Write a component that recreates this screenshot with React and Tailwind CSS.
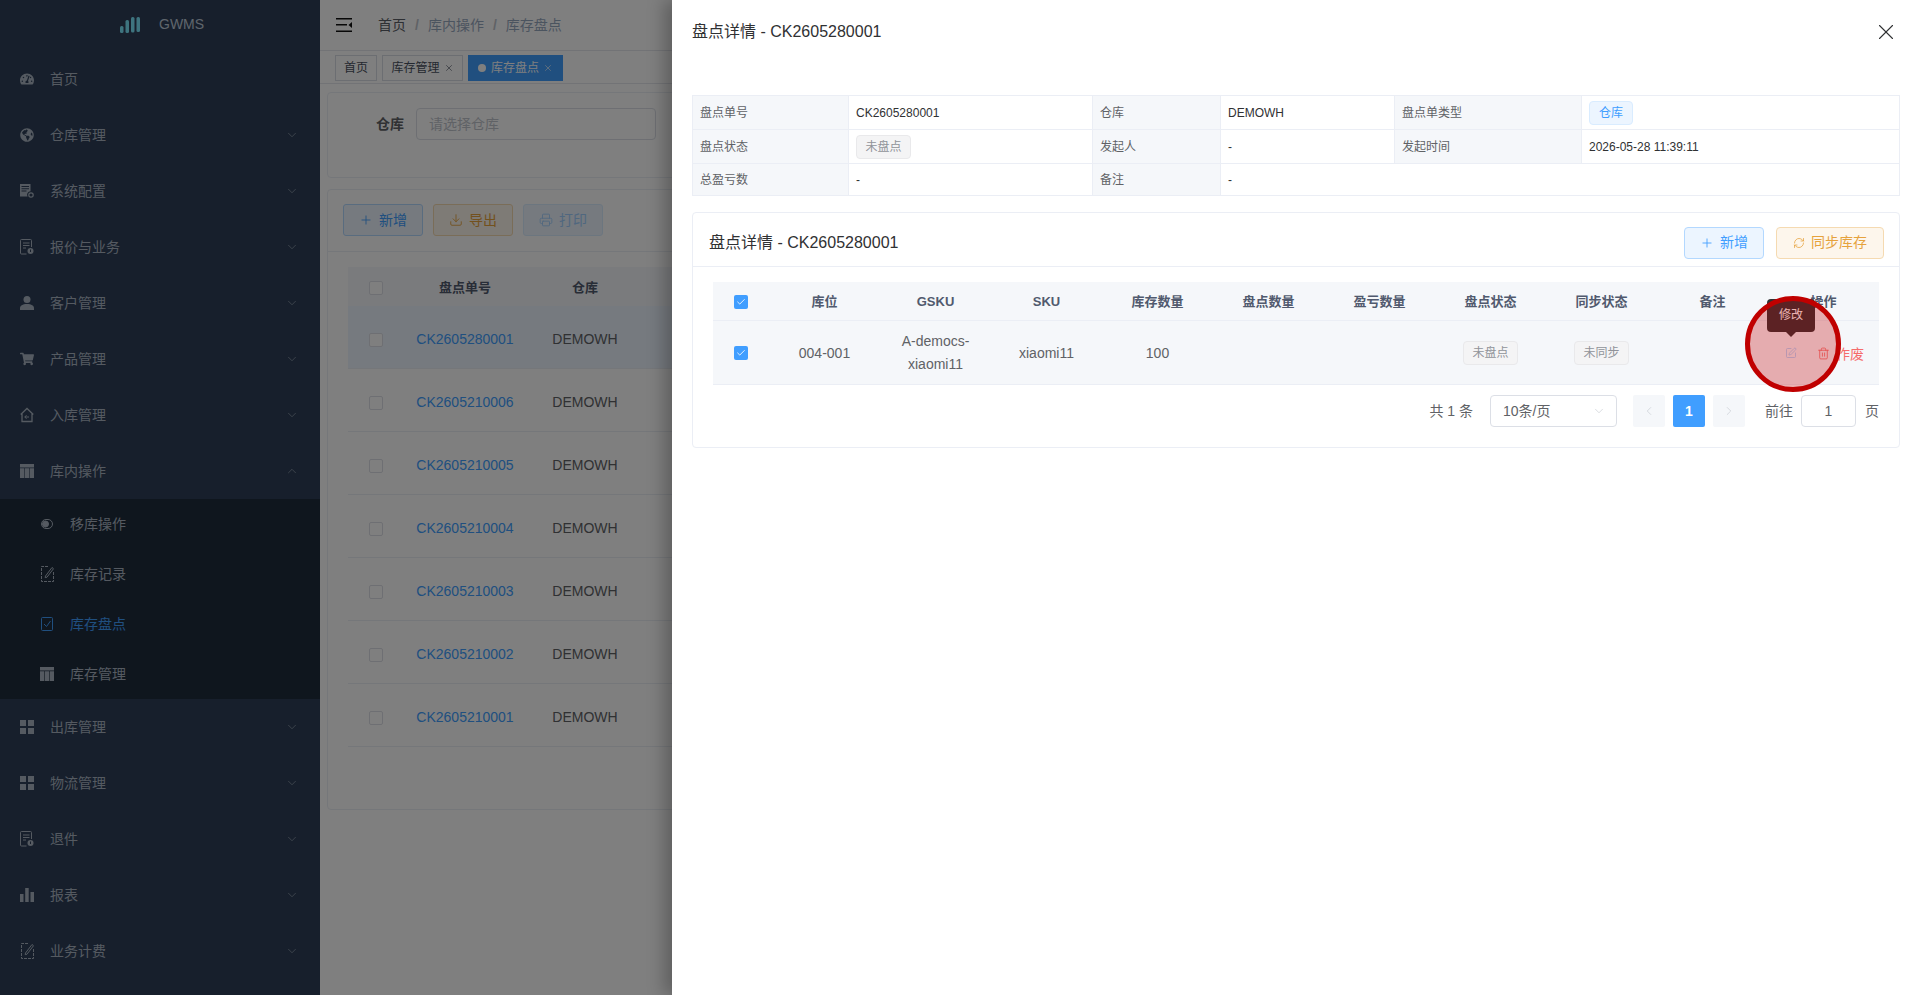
import React from 'react'
import { ChevronDown, ChevronUp, ChevronLeft, ChevronRight, Plus, Download, Printer, RefreshCw, X, SquarePen, Trash2, Check } from 'lucide-react'
import { FaTachometerAlt, FaGlobeAmericas, FaShoppingCart } from 'react-icons/fa'

const ServerDoc = () => (
  <svg viewBox="0 0 14 14" className="w-[14px] h-[14px]" fill="currentColor">
    <path d="M0 0h10.500v7.200a3.600 3.600 0 0 0-3 5.300H0z" />
    <path d="M1.500 2h7.500v1H1.500zM1.500 4.300h7.500v1H1.500zM1.500 6.600h5v1h-5z" fill="#2e3f58" />
    <circle cx="11" cy="11" r="2.200" fill="none" stroke="currentColor" strokeWidth="1.200" />
  </svg>
)
const OutlineDoc = () => (
  <svg viewBox="0 0 14 16" className="w-[14px] h-[16px]" fill="none" stroke="currentColor" strokeWidth="1">
    <path d="M6.500 15H1.500a1 1 0 0 1-1-1V1.500a1 1 0 0 1 1-1h9a1 1 0 0 1 1 1V8" />
    <path d="M3 4h6.500M3 6.500h6.500M3 9h3" />
    <circle cx="10.500" cy="12" r="3" fill="currentColor" stroke="none" />
    <path d="M10.500 10.500v2.500" stroke="#2e3f58" />
  </svg>
)
const House = () => (
  <svg viewBox="0 0 14 16" className="w-[14px] h-[16px]" fill="none" stroke="currentColor" strokeWidth="1.300">
    <path d="M.7 7.500 7 1.500l6.300 6M2 6.500v8h10v-8" />
    <path d="M4.800 10h4.200M6.500 8.200 4.800 10l1.700 1.800" strokeWidth="1" />
  </svg>
)
const Person = () => (
  <svg viewBox="0 0 14 14" className="w-[14px] h-[14px]" fill="currentColor">
    <circle cx="7" cy="3.500" r="3.500" />
    <path d="M0 14v-1.800C0 9.800 2.500 8 7 8s7 1.800 7 4.200V14z" />
  </svg>
)
const TableIcon = () => (
  <svg viewBox="0 0 14 14" className="w-[14px] h-[14px]" fill="currentColor">
    <path d="M0 0h14v3.500H0zM0 4.200h4.300V14H0zM4.900 4.200h4.200V14H4.900zM9.700 4.200H14V14H9.700z" />
  </svg>
)
const Squares = () => (
  <svg viewBox="0 0 14 14" className="w-[14px] h-[14px]" fill="currentColor">
    <path d="M0 0h6v6H0zM8 0h6v6H8zM0 8h6v6H0zM8 8h6v6H8z" />
  </svg>
)
const Bars = () => (
  <svg viewBox="0 0 14 14" className="w-[14px] h-[14px]" fill="currentColor">
    <path d="M0 6h3.500v8H0zM5.200 0h3.500v14H5.200zM10.500 4H14v10h-3.500z" />
  </svg>
)
const EditDoc = () => (
  <svg viewBox="0 0 13 16" className="w-[13px] h-[16px]" fill="none" stroke="currentColor" strokeWidth="1">
    <path d="M7 .5H.5v15h12V5" strokeDasharray="3 1" />
    <path d="m4.500 10 6.500-8.500 1.500 1.200L6 11.200l-1.800.5z" />
  </svg>
)
const Toggle = () => (
  <svg viewBox="0 0 12 10" className="w-[12px] h-[10px]" fill="none" stroke="currentColor" strokeWidth="1">
    <rect x=".5" y=".5" width="11" height="9" rx="4.500" />
    <circle cx="4.500" cy="5" r="3" fill="currentColor" />
  </svg>
)
const CheckSquare = () => (
  <svg viewBox="0 0 12 14" className="w-[12px] h-[14px]" fill="none" stroke="currentColor" strokeWidth="1">
    <rect x=".5" y=".5" width="11" height="13" rx="1" />
    <path d="m3 7 2.500 2.500L9.500 4" />
  </svg>
)

const menus = [
  { name: '首页', icon: <FaTachometerAlt className="w-[14px] h-[14px]" />, noArrow: true },
  { name: '仓库管理', icon: <FaGlobeAmericas className="w-[14px] h-[14px]" /> },
  { name: '系统配置', icon: <ServerDoc /> },
  { name: '报价与业务', icon: <OutlineDoc /> },
  { name: '客户管理', icon: <Person /> },
  { name: '产品管理', icon: <FaShoppingCart className="w-[14px] h-[14px]" /> },
  { name: '入库管理', icon: <House /> },
]
const menusAfter = [
  { name: '出库管理', icon: <Squares /> },
  { name: '物流管理', icon: <Squares /> },
  { name: '退件', icon: <OutlineDoc /> },
  { name: '报表', icon: <Bars /> },
  { name: '业务计费', icon: <EditDoc /> },
]
const subMenus = [
  { name: '移库操作', icon: <Toggle /> },
  { name: '库存记录', icon: <EditDoc /> },
  { name: '库存盘点', icon: <CheckSquare />, active: true },
  { name: '库存管理', icon: <TableIcon /> },
]
const orders = ['CK2605280001', 'CK2605210006', 'CK2605210005', 'CK2605210004', 'CK2605210003', 'CK2605210002', 'CK2605210001']

const MenuItem = ({ item, open }) => (
  <div className="h-[56px] pl-[20px] pr-[21px] flex items-center text-[14px] text-[#aab5c3]">
    <span className="w-[14px] flex justify-center">{item.icon}</span>
    <span className="ml-[16px] flex-1">{item.name}</span>
    {!item.noArrow && (open
      ? <ChevronUp className="w-[14px] h-[14px]" strokeWidth={1} />
      : <ChevronDown className="w-[14px] h-[14px]" strokeWidth={1} />)}
  </div>
)

const Sidebar = () => (
  <div className="w-[320px] shrink-0 h-full bg-[#2e3f58] overflow-hidden">
    <div className="h-[51px] flex items-start pt-[17px] pl-[120px]">
      <svg viewBox="0 0 21 16" className="w-[21px] h-[16px]" fill="#7ce8ff">
        <rect x="0" y="9" width="3.500" height="7" rx="1.500" />
        <rect x="5.500" y="3" width="3.500" height="13" rx="1.500" />
        <rect x="11" y="0" width="3.500" height="15.500" rx="1.500" />
        <rect x="16.500" y="0" width="3.500" height="15" rx="1.500" />
      </svg>
      <span className="ml-[18px] -mt-[3px] text-[14px] leading-[20px] text-[#bfcbd9]">GWMS</span>
    </div>
    {menus.map((m) => <MenuItem key={m.name} item={m} />)}
    <MenuItem item={{ name: '库内操作', icon: <TableIcon /> }} open />
    <div className="bg-[#1f2d3d]">
      {subMenus.map((s) => (
        <div key={s.name} className={`h-[50px] pl-[40px] flex items-center text-[14px] ${s.active ? 'text-[#409eff]' : 'text-[#aab5c3]'}`}>
          <span className="w-[14px] flex justify-center">{s.icon}</span>
          <span className="ml-[16px]">{s.name}</span>
        </div>
      ))}
    </div>
    {menusAfter.map((m) => <MenuItem key={m.name} item={m} />)}
  </div>
)

const Page = () => (
  <div className="flex-1 min-w-0 h-full bg-white">
    <div className="h-[51px] border-b border-[#e4e7ed] flex items-center pl-[16px] text-[14px]">
      <svg viewBox="0 0 16 14" className="w-[16px] h-[14px]" fill="#111">
        <path d="M0 0h16v1.500H0zM0 6h11v1.500H0zM0 12.500h16V14H0zM16 4v6l-3.500-3z" />
      </svg>
      <span className="ml-[26px] text-[#5a5e66]">首页</span>
      <span className="mx-[9px] text-[#c0c4cc] font-bold">/</span>
      <span className="text-[#97a8be]">库内操作</span>
      <span className="mx-[9px] text-[#c0c4cc] font-bold">/</span>
      <span className="text-[#97a8be]">库存盘点</span>
    </div>
    <div className="h-[33px] border-b border-[#e4e7ed] flex items-start pt-[4px] pl-[15px] gap-[5px] text-[12px]">
      <div className="h-[26px] w-[42px] border border-[#d8dce5] flex items-center justify-center text-[#495060]">首页</div>
      <div className="h-[26px] w-[81px] border border-[#d8dce5] flex items-center justify-center gap-[4px] text-[#495060]">
        库存管理<X className="w-[10px] h-[10px]" strokeWidth={1.5} />
      </div>
      <div className="h-[26px] w-[95px] bg-[#409eff] flex items-center justify-center text-white">
        <span className="w-[8px] h-[8px] rounded-full bg-white mr-[5px]"></span>库存盘点<X className="w-[10px] h-[10px] ml-[4px]" strokeWidth={1.5} />
      </div>
    </div>
    <div className="pt-[8px] px-[7px]">
      <div className="h-[86px] border border-[#ebeef5] rounded-[4px] pt-[15px] pl-[48px] flex items-start">
        <span className="text-[14px] font-bold leading-[32px] text-[#606266]">仓库</span>
        <div className="ml-[12px] w-[240px] h-[32px] border border-[#dcdfe6] rounded-[4px] pl-[12px] flex items-center text-[14px] text-[#c0c4cc]">请选择仓库</div>
      </div>
      <div className="mt-[11px] h-[621px] border border-[#ebeef5] rounded-[4px]">
        <div className="h-[62px] border-b border-[#ebeef5] pt-[14px] pl-[15px] flex items-start gap-[10px] text-[14px]">
          <button className="w-[80px] h-[32px] rounded-[3px] border border-[#b3d8ff] bg-[#ecf5ff] text-[#409eff] flex items-center justify-center gap-[6px]"><Plus className="w-[14px] h-[14px]" strokeWidth={1.5} />新增</button>
          <button className="w-[80px] h-[32px] rounded-[3px] border border-[#f5dab1] bg-[#fdf6ec] text-[#e6a23c] flex items-center justify-center gap-[6px]"><Download className="w-[14px] h-[14px]" strokeWidth={1.5} />导出</button>
          <button className="w-[80px] h-[32px] rounded-[3px] border border-[#d9ecff] bg-[#ecf5ff] text-[#a0cfff] flex items-center justify-center gap-[6px]"><Printer className="w-[14px] h-[14px]" strokeWidth={1.5} />打印</button>
        </div>
        <div className="mt-[15px] mx-[20px]">
          <div className="h-[39px] pt-[3px] bg-[#f5f7fa] flex items-center text-[13px] font-bold text-[#515a6e]">
            <div className="w-[57px] pl-[21px]"><span className="block w-[14px] h-[14px] bg-white border border-[#dcdfe6] rounded-[2px]"></span></div>
            <div className="w-[120px] text-center">盘点单号</div>
            <div className="w-[120px] text-center">仓库</div>
            <div className="w-[120px] text-center">盘点状态</div>
          </div>
          {orders.map((no, i) => (
            <div key={no} className={`h-[63px] pt-[5px] border-b border-[#ebeef5] flex items-center text-[14px] text-[#606266] ${i === 0 ? 'bg-[#ecf5ff]' : ''}`}>
              <div className="w-[57px] pl-[21px]"><span className="block w-[14px] h-[14px] bg-white border border-[#dcdfe6] rounded-[2px]"></span></div>
              <div className="w-[120px] text-center text-[#409eff]">{no}</div>
              <div className="w-[120px] text-center">DEMOWH</div>
            </div>
          ))}
        </div>
      </div>
    </div>
  </div>
)

const Tag = ({ children, blue }) => (
  <span className={`inline-flex items-center justify-center h-[24px] rounded-[4px] border text-[12px] ${blue ? 'w-[44px] bg-[#ecf5ff] border-[#d9ecff] text-[#409eff]' : 'w-[55px] bg-[#f4f4f5] border-[#e9e9eb] text-[#909399]'}`}>{children}</span>
)

const Label = ({ children }) => (
  <div className="bg-[#f5f7fa] border-r border-b border-[#ebeef5] pl-[7px] flex items-center text-[#606266]">{children}</div>
)
const Value = ({ children, className = '' }) => (
  <div className={`border-r border-b border-[#ebeef5] pl-[7px] flex items-center text-[#303133] ${className}`}>{children}</div>
)

const Descriptions = () => (
  <div className="grid grid-cols-[156px_244px_128px_174px_187px_1fr] grid-rows-[34px_34px_32px] border-t border-l border-[#ebeef5] text-[12px]">
    <Label>盘点单号</Label><Value>CK2605280001</Value>
    <Label>仓库</Label><Value>DEMOWH</Value>
    <Label>盘点单类型</Label><Value><Tag blue>仓库</Tag></Value>
    <Label>盘点状态</Label><Value><Tag>未盘点</Tag></Value>
    <Label>发起人</Label><Value>-</Value>
    <Label>发起时间</Label><Value>2026-05-28 11:39:11</Value>
    <Label>总盈亏数</Label><Value>-</Value>
    <Label>备注</Label><Value className="col-span-3">-</Value>
  </div>
)

const BlueCheck = () => (
  <span className="w-[14px] h-[14px] rounded-[2px] bg-[#409eff] flex items-center justify-center text-white">
    <Check className="w-[10px] h-[10px]" strokeWidth={2} />
  </span>
)

const heads = ['库位', 'GSKU', 'SKU', '库存数量', '盘点数量', '盈亏数量', '盘点状态', '同步状态', '备注', '操作']

const DetailTable = () => (
  <div className="text-center">
    <div className="grid grid-cols-[56px_repeat(10,1fr)] h-[39px] pt-[1px] bg-[#f5f7fa] border-b border-[#ebeef5] items-center text-[13px] font-bold text-[#515a6e]">
      <div className="flex justify-center"><BlueCheck /></div>
      {heads.map((h) => <div key={h}>{h}</div>)}
    </div>
    <div className="grid grid-cols-[56px_repeat(10,1fr)] h-[64px] pt-[1px] bg-[#f5f7fa] border-b border-[#ebeef5] items-center text-[14px] leading-[23px] text-[#606266]">
      <div className="flex justify-center"><BlueCheck /></div>
      <div>004-001</div>
      <div className="px-[14px]">A-democs-xiaomi11</div>
      <div>xiaomi11</div>
      <div>100</div>
      <div></div>
      <div></div>
      <div><Tag>未盘点</Tag></div>
      <div><Tag>未同步</Tag></div>
      <div></div>
      <div className="relative h-full flex items-center pl-[17px]">
        <SquarePen className="w-[12px] h-[12px] text-[#a0cfff]" strokeWidth={1.5} />
        <Trash2 className="ml-[20px] w-[13px] h-[13px] text-[#f56c6c]" strokeWidth={1.5} />
        <span className="ml-[6px] mt-[2px] whitespace-nowrap text-[#f56c6c]">作废</span>
        <div className="absolute left-[-1px] top-[-23px] w-[48px] h-[33px] rounded-[4px] bg-[#303133] text-white text-[12px] flex items-center justify-center">
          修改
          <span className="absolute left-[19px] top-[33px] w-0 h-0 border-x-[5px] border-x-transparent border-t-[5px] border-t-[#303133]"></span>
        </div>
        <div className="absolute left-[-23px] top-[-26px] w-[96px] h-[96px] rounded-full border-[5px] border-[#c00000] bg-[#c00000]/30"></div>
      </div>
    </div>
  </div>
)

const Pagination = () => (
  <div className="mt-[10px] flex justify-end items-center text-[14px] text-[#606266]">
    <span>共 1 条</span>
    <div className="ml-[17px] w-[127px] h-[32px] border border-[#dcdfe6] rounded-[4px] pl-[12px] pr-[10px] flex items-center justify-between">
      10条/页<ChevronDown className="w-[14px] h-[14px] text-[#c0c4cc]" strokeWidth={1} />
    </div>
    <span className="ml-[16px] w-[32px] h-[32px] rounded-[2px] bg-[#f5f7fa] flex items-center justify-center text-[#c0c4cc]"><ChevronLeft className="w-[14px] h-[14px]" strokeWidth={1} /></span>
    <span className="ml-[8px] w-[32px] h-[32px] rounded-[2px] bg-[#409eff] flex items-center justify-center text-white font-bold">1</span>
    <span className="ml-[8px] w-[32px] h-[32px] rounded-[2px] bg-[#f5f7fa] flex items-center justify-center text-[#c0c4cc]"><ChevronRight className="w-[14px] h-[14px]" strokeWidth={1} /></span>
    <span className="ml-[20px]">前往</span>
    <span className="ml-[8px] w-[55px] h-[32px] border border-[#dcdfe6] rounded-[4px] flex items-center justify-center">1</span>
    <span className="ml-[9px]">页</span>
  </div>
)

const Drawer = () => (
  <div className="absolute right-0 top-0 w-[1248px] h-full bg-white shadow-[-8px_0_16px_rgba(0,0,0,0.25)]">
    <div className="flex items-center justify-between pt-[20px] pl-[20px] pr-[21px] h-[44px]">
      <span className="text-[16px] leading-[24px] text-[#303133]">盘点详情 - CK2605280001</span>
      <X className="w-[26px] h-[26px] text-[#303133]" strokeWidth={1} />
    </div>
    <div className="pt-[51px] pl-[20px] pr-[20px]">
      <Descriptions />
      <div className="mt-[16px] h-[236px] border border-[#ebeef5] rounded-[4px]">
        <div className="h-[54px] pt-[6px] border-b border-[#ebeef5] pl-[16px] pr-[15px] flex items-center justify-between">
          <span className="text-[16px] text-[#303133]">盘点详情 - CK2605280001</span>
          <div className="flex gap-[12px] text-[14px]">
            <button className="w-[80px] h-[32px] rounded-[4px] border border-[#b3d8ff] bg-[#ecf5ff] text-[#409eff] flex items-center justify-center gap-[6px]"><Plus className="w-[14px] h-[14px]" strokeWidth={1.5} />新增</button>
            <button className="w-[108px] h-[32px] rounded-[4px] border border-[#f5dab1] bg-[#fdf6ec] text-[#e6a23c] flex items-center justify-center gap-[6px]"><RefreshCw className="w-[12px] h-[12px]" strokeWidth={1.5} />同步库存</button>
          </div>
        </div>
        <div className="pt-[15px] pl-[20px] pr-[20px]">
          <DetailTable />
          <Pagination />
        </div>
      </div>
    </div>
  </div>
)

export default function App() {
  return (
    <div className="relative w-full h-screen overflow-hidden flex [font-family:'Liberation_Sans','Noto_Sans_CJK_SC',sans-serif]">
      <Sidebar />
      <Page />
      <div className="absolute inset-0 bg-black/50"></div>
      <Drawer />
    </div>
  )
}
